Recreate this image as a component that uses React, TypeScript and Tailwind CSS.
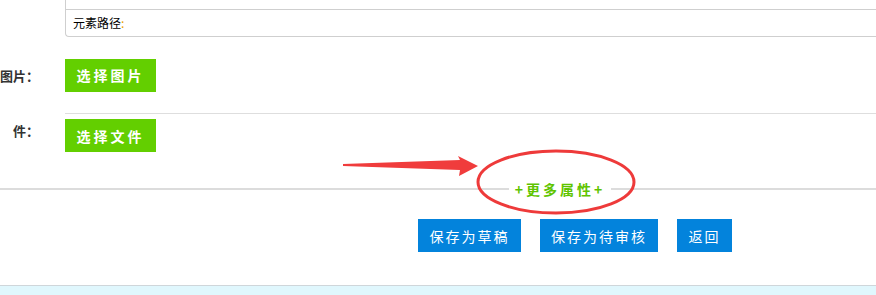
import React from 'react';

const font = { fontFamily: '"Noto Sans CJK SC", "Liberation Sans", sans-serif' };

const GreenButton = ({ label }: { label: string }) => (
  <button className="h-[33px] w-[91px] bg-[#63cf00] text-[14px] font-bold tracking-[3px] text-white leading-none">
    {label}
  </button>
);

const BlueButton = ({ label, width }: { label: string; width: string }) => (
  <button className={`h-[33px] ${width} bg-[#0383dc] text-[14px] tracking-[2px] text-white leading-none`}>
    {label}
  </button>
);

export default function App() {
  return (
    <div className="relative h-[295px] w-[876px] overflow-hidden bg-white text-[#333]" style={font}>
      {/* editor bottom */}
      <div className="pl-[65px]">
        <div className="rounded-bl-[4px] border-b border-l border-[#cfcfcf]">
          <div className="h-[10px] border-b border-[#cfcfcf]" />
          <div className="flex h-[26px] items-center pl-[7px] text-[12px] text-black">
            元素路径<span className="text-[#e8a000]">:</span>
          </div>
        </div>
      </div>

      {/* image row */}
      <div className="flex">
        <div className="flex h-[77px] w-[65px] items-center justify-end pr-[26px] text-[13px] font-bold whitespace-nowrap">
          图片：
        </div>
        <div className="flex flex-1 items-center border-b border-[#dedede]">
          <GreenButton label="选择图片" />
        </div>
      </div>

      {/* file row */}
      <div className="flex h-[74px]">
        <div className="w-[65px] pt-[7px] pr-[26px] text-right text-[13px] font-bold whitespace-nowrap">件：</div>
        <div className="flex-1 pt-[5px]">
          <GreenButton label="选择文件" />
        </div>
      </div>

      {/* more attributes divider */}
      <div className="flex h-[2px] items-center justify-center bg-[#dcdcdc]">
        <span className="translate-x-[122px] bg-white px-[6px] text-[14px] font-bold tracking-[3px] text-[#5fc400] leading-none">
          +更多属性+
        </span>
      </div>

      {/* action buttons */}
      <div className="flex h-[95px] gap-[19px] pt-[29px] pl-[418px]">
        <BlueButton label="保存为草稿" width="w-[103px]" />
        <BlueButton label="保存为待审核" width="w-[118px]" />
        <BlueButton label="返回" width="w-[55px]" />
      </div>

      <div className="h-[10px] border-t border-[#cfd6da] bg-[#e0f7fd]" />

      {/* annotation overlay */}
      <svg className="absolute left-0 top-0" width="876" height="295" viewBox="0 0 876 295">
        <ellipse cx="556" cy="182" rx="78" ry="31" fill="none" stroke="#ee3a3a" strokeWidth="3" />
        <polygon points="343,164 460,160 458,156 478,166 459,176 460,170 343,166" fill="#f03c3c" />
      </svg>
    </div>
  );
}
